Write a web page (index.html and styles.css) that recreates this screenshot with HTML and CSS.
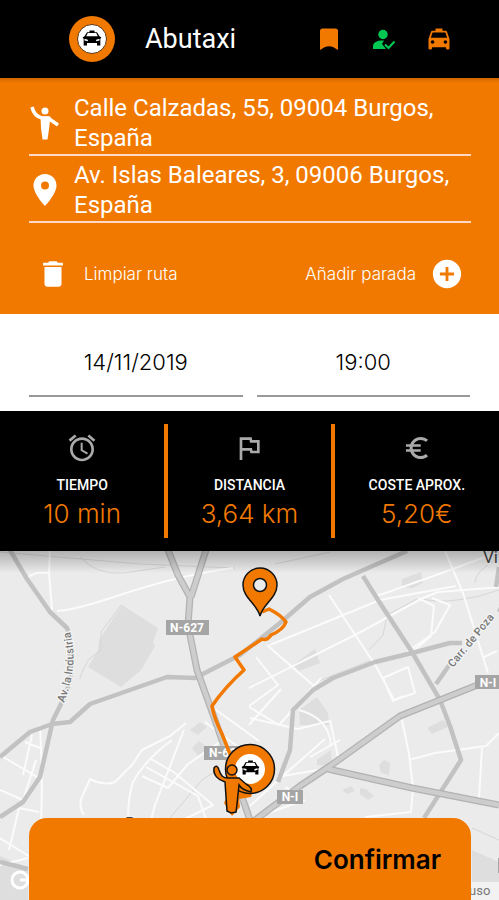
FILE: index.html
```html
<!DOCTYPE html>
<html lang="es">
<head>
<meta charset="utf-8">
<meta name="viewport" content="width=device-width, initial-scale=1">
<title>Abutaxi</title>
<link rel="stylesheet" href="styles.css">
</head>
<body>
<svg class="defs" aria-hidden="true">
  <symbol id="taxi" viewBox="0 0 24 24"><path d="M18.92 6.01C18.72 5.42 18.16 5 17.5 5H15V3H9v2H6.500c-.66 0-1.210.42-1.420 1.010L3 12v8c0 .55.45 1 1 1h1c.55 0 1-.45 1-1v-1h12v1c0 .55.45 1 1 1h1c.55 0 1-.45 1-1v-8l-2.080-5.990zM6.500 16c-.83 0-1.500-.67-1.500-1.500S5.670 13 6.500 13s1.500.67 1.500 1.500S7.330 16 6.500 16zm11 0c-.83 0-1.500-.67-1.500-1.500s.67-1.500 1.500-1.500 1.500.67 1.500 1.500-.67 1.500-1.500 1.500zM5 11l1.500-4.500h11L19 11H5z"/></symbol>
  <symbol id="cab" viewBox="0 0 24 20"><path d="M9 3V1h6v2h3l3 5 2 1v1l-1 1v8h-4v-3H6v3H2v-8L1 10V9l2-1 3-5zM7 4 5 8h14l-2-4zM3 11v2l4 1v-2zm18 0-4 1v2l4-1z" fill-rule="evenodd"/></symbol>
</svg>
<div class="app">
  <header class="bar">
    <svg class="logo" viewBox="0 0 46 46" role="img" aria-label="Logo"><circle class="orange" cx="23" cy="23" r="23"/><circle cx="23" cy="23" r="14.500" fill="#fff" stroke="#5c3410"/><use href="#cab" x="13" y="13" width="20" height="18"/></svg>
    <h1 class="title">Abutaxi</h1>
    <nav class="tools">
      <button class="tool" type="button" aria-label="Favoritos"><svg viewBox="0 0 28 28"><path d="M7.500 3.500h13q2.500 0 2.500 2.500v19l-5-3q-4-1.500-8 0l-5 3V6q0-2.500 2.500-2.500z"/></svg></button>
      <button class="tool tool-ok" type="button" aria-label="Usuario"><svg viewBox="0 0 28 28"><circle cx="13" cy="9.500" r="4.700"/><path d="M3 24v-3c0-4 6-6 11-5.300l-2 3.300 4 5z"/><path d="m15 19.500 3.500 3.500 6-6.500" fill="none" stroke="currentColor" stroke-width="2.200"/></svg></button>
      <button class="tool" type="button" aria-label="Taxi"><svg viewBox="0 0 24 24"><use href="#taxi"/></svg></button>
    </nav>
  </header>

  <section class="route">
    <div class="stop">
      <label for="from" aria-label="Origen"><svg viewBox="0 0 32 38"><circle cx="16" cy="7" r="3.500"/><path d="M3 3q2 9 10 11h6l10 7" fill="none" stroke="currentColor" stroke-width="3.500"/><path d="M11.500 12.500h10L20 25l-1.500 10.500h-5L12 24z"/></svg></label>
      <textarea id="from" rows="2">Calle Calzadas, 55, 09004 Burgos, España</textarea>
    </div>
    <div class="stop">
      <label for="to" aria-label="Destino"><svg viewBox="0 0 32 38"><path d="M16 3C9.500 3 4.500 8 4.500 14.500 4.500 23 16 35 16 35s11.500-12 11.500-20.500C27.500 8 22.500 3 16 3zm0 7.500a4 4 0 1 1 0 8 4 4 0 0 1 0-8z"/></svg></label>
      <textarea id="to" rows="2">Av. Islas Baleares, 3, 09006 Burgos, España</textarea>
    </div>
    <div class="actions">
      <button class="action" type="button"><svg viewBox="0 0 24 24"><path d="M6 19c0 1.100.9 2 2 2h8c1.100 0 2-.9 2-2V7H6v12zM19 4h-3.500l-1-1h-5l-1 1H5v2h14V4z"/></svg>Limpiar ruta</button>
      <button class="action" type="button">Añadir parada<svg viewBox="0 0 24 24"><path d="M12 2C6.480 2 2 6.480 2 12s4.480 10 10 10 10-4.480 10-10S17.520 2 12 2zm5 11h-4v4h-2v-4H7v-2h4V7h2v4h4v2z"/></svg></button>
    </div>
  </section>

  <section class="when">
    <input type="text" aria-label="Fecha" value="14/11/2019">
    <input type="text" aria-label="Hora" value="19:00">
  </section>

  <section class="stats">
    <div class="stat"><svg viewBox="0 0 24 24"><path d="M22 5.720l-4.600-3.860-1.290 1.530 4.600 3.860L22 5.720zM7.880 3.390L6.600 1.860 2 5.710l1.290 1.530 4.590-3.850zM12.500 8H11v6l4.750 2.850.75-1.230-4-2.370V8zM12 4c-4.970 0-9 4.030-9 9s4.020 9 9 9c4.970 0 9-4.030 9-9s-4.030-9-9-9zm0 16c-3.870 0-7-3.130-7-7s3.130-7 7-7 7 3.130 7 7-3.130 7-7 7z"/></svg><span class="name">TIEMPO</span><span class="value">10 min</span></div>
    <div class="stat"><svg viewBox="0 0 24 24"><path d="M12.360 6l.4 2H18v6h-3.360l-.4-2H7V6h5.360M14 4H5v17h2v-7h5.600l.4 2h7V6h-5.600L14 4z"/></svg><span class="name">DISTANCIA</span><span class="value">3,64 km</span></div>
    <div class="stat"><svg viewBox="-1 -1 26 26"><path d="M15 18.500c-2.510 0-4.680-1.420-5.760-3.500H15v-2H8.580c-.05-.33-.08-.66-.08-1s.03-.67.08-1H15V9H9.240C10.320 6.920 12.500 5.500 15 5.500c1.610 0 3.090.59 4.230 1.570L21 5.300C19.410 3.870 17.300 3 15 3c-3.920 0-7.240 2.510-8.480 6H3v2h3.060c-.04.33-.06.66-.06 1s.02.67.06 1H3v2h3.520c1.240 3.490 4.560 6 8.480 6 2.310 0 4.410-.87 6-2.300l-1.780-1.770c-1.130.98-2.600 1.570-4.220 1.570z"/></svg><span class="name">COSTE APROX.</span><span class="value">5,20€</span></div>
  </section>

  <main class="map">
    <svg class="canvas" viewBox="0 551 499 349" preserveAspectRatio="xMidYMid slice" role="img" aria-label="Mapa de la ruta">
      <defs>
        <linearGradient id="shade" x2="0" y2="1"><stop stop-color="#000" stop-opacity=".25"/><stop offset="1" stop-color="#000" stop-opacity="0"/></linearGradient>
        <path id="industria" d="M64 703Q80 662 69 628"/>
        <path id="poza" d="M453 668 499 612"/>
      </defs>
      <rect class="land" y="551" width="499" height="349"/>
      <g class="block">
        <path d="m122 605 36 23-5 14 2 4-14 24-20 17-33-20 10-17 1-10z"/>
        <path d="m402 579 19-7 2 11-10 5-11-1zM293 665l22-16 5 14-21 8zM299 710l18-13 11 16 1 12h-29zM190 730l10-8 7 5-9 8zM192 748l7-7 9 7-10 8zM317 760l14-10 1 16-15-1zM379 765l5-5 6 3-1 12-8-2zM342 790l9-4 4 5-8 3zM360 788l6 1 8 7-6 4-8-6zM427 728l16-8 7 6-18 8zM0 856l28 12v32H0zM472 850l27 12v20h-27z"/>
      </g>
      <g class="thin">
        <path d="M80 557q16 18 43 16l42-6M121 605l-20 27v18l-12 9q-9 16-9 20M0 552l140 12 95 4M275 564l55-12M499 590q-22 8-42 10-22 3-38-2l-32 17-4 20-14 15M475 583q0-12 22-24M316 682l56-22M472 828l27 12M170 818l32-38 18-12"/>
      </g>
      <g class="street">
        <path d="M50 551l-1 22 3 37M28 577q8-6 21-4M57 611q18-1 60-15 62-21 116-28"/>
        <path d="M329 595l25 38 23 35 17 32 21-7-7-26-25 11 10 23 10-5M267 645l47 41M377 596l62-22 60-22M445 551l18 42 25 80M270 645l110-45 76-14M249 688l108-54 64-35 17-7 65-5M432 598l18 7-15 27-28 20M411 653l20-17 3-30-16-8M256 657l22 28-29 21M249 707l30 18 42-47M281 689l-32 36M497 651l-13 6M299 710q30 8 32 35"/>
        <path d="M84 815q-6-9-2-18l8-18q14 7 25 3l17-17 10-15 28-14 16-13M172 740q-28 21-39 42-5 15-5 37M184 730l-29 75-4 15M146 767l52 29 8 23M142 776l26 12 20-24 32-22M151 759l24 14 38 32-30 15M212 707l47 34M205 722l44 33M40 725q3 60 1 94M25 742l15 6M0 755l37 22M0 790l23 10 13-40M0 838l35 22 15-34M9 850l10-42 20 4M0 865l28-7M32 735l-9 40"/>
        <path d="M250 718l48 11 32-8M330 720l8 37M402 720l7 34 4 34-2 24-46 5M409 760l26-7 51-7M482 748l-3 50M486 746l13-13M277 777l52-9M250 806l35-32 40-35M285 787l17 10M254 818l51-18M340 740l-30 17"/>
      </g>
      <g class="road">
        <path class="edge" d="M10 550l17 29 23 33 17 16q12 33-2 68l-12 24-13 57-17 25-23 15M0 757l30-25 22-8 18-2 20-18 77-27 28 1 45-23 40-32 30-26 33-18 64-28M363 576l15 24 34 52 28 48 10 26 11 34-37 58M462 643l-12 0-38 10-37 9-42 16-20 12-20 20-3 40-12 32M436 684l14-20M499 612l5-10M496 587l3-20M0 862l28 7"/>
      </g>
      <g class="highway">
        <path class="case" d="M168 550l10 25 12 22-2 28 9 45 18 50 35 100M206 550l-15 47M499 679l-24 7-35 14-40 16-70 50-30 20-50 38M328 769l84 19 87 17"/>
        <path class="fill" d="M168 550l10 25 12 22-2 28 9 45 18 50 35 100M206 550l-15 47M499 679l-24 7-35 14-40 16-70 50-30 20-50 38M328 769l84 19 87 17"/>
      </g>
      <g class="halo">
        <text><textPath href="#industria">Av. la Industria</textPath></text>
        <text><textPath href="#poza">Carr. de Poza</textPath></text>
        <text class="place" x="483" y="563">Vi</text>
        <text class="place" x="125" y="829">Burgos</text>
      </g>
      <g class="shields">
        <rect x="166" y="620" width="43" height="15"/><text x="187" y="632">N-627</text>
        <rect x="204" y="746" width="43" height="14"/><text x="226" y="757">N-627</text>
        <rect x="277" y="790" width="26" height="14"/><text x="290" y="801">N-I</text>
        <rect x="475" y="675" width="26" height="14"/><text x="488" y="687">N-I</text>
        <rect x="498" y="858" width="20" height="15"/>
      </g>
      <rect y="551" width="499" height="22" fill="url(#shade)"/>
      <path class="trip" d="m262 612 7-3q12 6 17 13-3 8-15 13-4 6-9 4l-27 18 9 13q-19 17-32 36 2 12 10 28l22 55"/>
      <path class="orange line" d="M260 616c-3-12-17-18-17-31a17 17 0 0 1 34 0c0 13-14 19-17 31z"/>
      <circle class="land line" cx="260" cy="585" r="6.500"/>
      <path class="orange" d="m224 803 8 13 8-9-1-8 12-2 2-7-20-8z"/>
      <circle class="orange line" cx="250" cy="769" r="24.500"/>
      <circle cx="250" cy="769" r="15" fill="#fff"/>
      <use href="#cab" x="241" y="758" width="19" height="19"/>
      <path class="orange line" d="M214 768c2-3 4-2 5 2 2 6 4 8 9 8h11l7 6q7 4 5 8-9-2-12-7l-2 19-1 8-5 1-4-2-2-29c-7-2-12-7-11-14z"/>
      <circle class="orange line" cx="232" cy="770" r="5"/>
      <circle cx="20" cy="880" r="8" fill="none" stroke="#fff" stroke-width="3"/><path d="M20 880h8" stroke="#fff" stroke-width="3"/>
      <rect x="463" y="882" width="36" height="18" fill="#f2f2f2"/><text class="terms" x="469" y="895">uso</text>
    </svg>
    <button class="confirm" type="button">Confirmar</button>
  </main>
</div>
</body>
</html>
```
FILE: styles.css
```css
* { box-sizing: border-box; }

body {
  margin: 0;
  background: #000;
  font-family: Inter, "Liberation Sans", sans-serif;
}

button, input, textarea {
  margin: 0;
  padding: 0;
  border: 0;
  background: none;
  color: inherit;
  font: inherit;
}

svg { display: block; flex: none; fill: currentColor; }
.defs { position: absolute; width: 0; height: 0; }
.orange { fill: #f27900; }

.app { display: flex; flex-direction: column; min-height: 100vh; }

.bar {
  display: flex;
  align-items: center;
  height: 78px;
  padding: 0 46px 0 69px;
  color: #000;
}
.logo { width: 46px; height: 46px; }
.title {
  margin: 0 0 0 30px;
  color: #fff;
  font: 400 27px/32px Roboto, sans-serif;
}
.tools { display: flex; gap: 27px; margin-left: auto; color: #f27900; }
.tool svg { width: 28px; height: 28px; }
.tool-ok { color: #00c853; }

.route {
  padding: 13px 28px 23px 29px;
  background: linear-gradient(#cf6700, #f27900 5px);
  color: #fff;
}
.stop {
  display: flex;
  align-items: center;
  gap: 13px;
  height: 65px;
  margin-bottom: 2px;
  border-bottom: 2px solid #ffd9c4;
}
.stop svg { width: 32px; height: 38px; }
.stop textarea {
  flex: 1;
  min-width: 0;
  height: 60px;
  overflow: hidden;
  resize: none;
  font: 400 24px/30px Roboto, sans-serif;
}
.actions {
  display: flex;
  justify-content: space-between;
  padding: 32px 7px 0;
}
.action {
  display: flex;
  align-items: center;
  gap: 14px;
  font-size: 17px;
  font-weight: 300;
}
.action svg { width: 34px; height: 34px; }

.when {
  display: grid;
  grid-template-columns: 1fr 1fr;
  gap: 14px;
  padding: 14px 29px;
  background: #fff;
}
.when input {
  width: 100%;
  height: 69px;
  border-bottom: 2px solid #999;
  text-align: center;
  font-size: 22px;
  font-weight: 300;
}

.stats {
  display: grid;
  grid-template-columns: repeat(3, 1fr);
  padding: 13px 0;
}
.stat {
  display: flex;
  flex-direction: column;
  align-items: center;
  height: 114px;
  padding-top: 8px;
  border: solid #f27900;
  border-width: 0 2px;
  color: #aaa;
}
.stat:first-child { border-left-width: 0; }
.stat:last-child { border-right-width: 0; }
.stat svg { width: 32px; height: 32px; }
.name { margin-top: 10px; color: #fff; font: 500 14px/22px Roboto, sans-serif; }
.value { color: #f27900; font-size: 26px; font-weight: 300; line-height: 36px; }

.map {
  position: relative;
  display: flex;
  flex: 1;
  align-items: flex-end;
  min-height: 348px;
  padding: 0 28px 0 29px;
  overflow: hidden;
}
.canvas { position: absolute; inset: 0; width: 100%; height: 100%; }
.confirm {
  position: relative;
  flex: 1;
  height: 82px;
  padding: 0 30px;
  border-radius: 18px 18px 0 0;
  background: #f27900;
  color: #000;
  font-size: 26px;
  font-weight: 600;
  text-align: right;
}

.land { fill: #ebebeb; }
.block { fill: #dedede; }
.thin, .street, .road, .highway, .trip { fill: none; stroke-linejoin: round; }
.thin { stroke: #d6d6d6; stroke-width: 1; }
.street { stroke: #fbfbfb; stroke-width: 2; }
.road { stroke: #c2c2c2; stroke-width: 4.5; }
.case { stroke: #b2b2b2; stroke-width: 7; }
.fill { stroke: #cdcdcd; stroke-width: 4.5; }
.trip { stroke: #f27900; stroke-width: 3.5; }
.line { stroke: #111; stroke-width: 1.5; }
.halo { fill: #777; stroke: #f2f2f2; stroke-width: 3; paint-order: stroke; font: 500 11px Roboto, sans-serif; }
.place { fill: #444; font-size: 17px; font-weight: 400; }
.shields rect { fill: #a5a5a5; }
.shields text { fill: #fff; font: 700 12px Roboto, sans-serif; text-anchor: middle; }
.terms { fill: #777; font: 400 13px Roboto, sans-serif; }
```
